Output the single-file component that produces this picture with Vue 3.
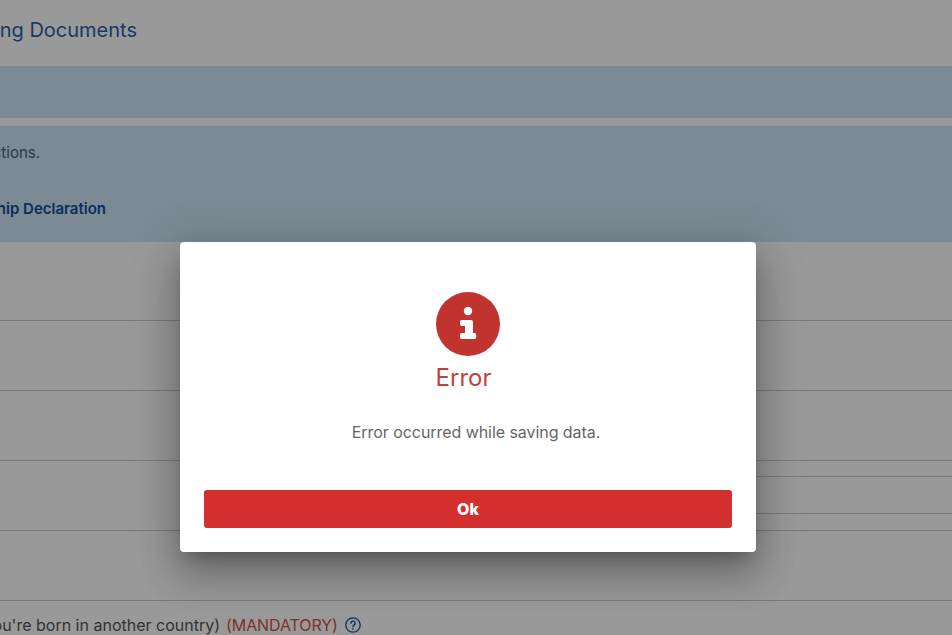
<script setup>
const rows = [
  { id: 2, input: false },
  { id: 3, input: false },
  { id: 4, input: true },
  { id: 5, input: false },
]
</script>

<template>
  <div class="page">
    <header class="head">
      <h1 class="title">Supporting Documents</h1>
    </header>
    <div class="band band-short"></div>
    <section class="band band-tall">
      <p class="clip note">Please read the instructions.</p>
      <p class="clip link">Citizenship Declaration</p>
    </section>
    <div class="row row-first"></div>
    <div v-for="r in rows" :key="r.id" class="row">
      <div v-if="r.input" class="field"></div>
    </div>
    <div class="last">
      <span class="clip-last">Birth Certificate (if you're born in another country)</span>
      <span class="mandatory">(MANDATORY)</span>
      <svg class="help" viewBox="0 0 16 16" width="16" height="16" aria-hidden="true">
        <circle cx="8" cy="8" r="7.2" fill="none" stroke="#0f4c9f" stroke-width="1.3" />
        <path d="M5.9 6.2a2.1 2.1 0 1 1 3.3 1.7c-.7.5-1.2.9-1.2 1.8" fill="none" stroke="#0f4c9f" stroke-width="1.3" stroke-linecap="round" />
        <circle cx="8" cy="11.8" r=".85" fill="#0f4c9f" />
      </svg>
    </div>

    <div class="overlay">
      <div class="modal">
        <svg class="icon" viewBox="0 0 64 64" width="64" height="64" aria-hidden="true">
          <circle cx="32" cy="32" r="32" fill="#c0332e" />
          <circle cx="32" cy="19" r="4.2" fill="#fff" />
          <path d="M26 28h9a2 2 0 0 1 2 2v11h1.500a1.700 1.700 0 0 1 1.700 1.700v2.600a1.700 1.700 0 0 1-1.700 1.700H25.700a1.700 1.700 0 0 1-1.700-1.700v-2.600a1.700 1.700 0 0 1 1.700-1.700h3.300v-7h-3.300a1.700 1.700 0 0 1-1.700-1.700v-2.600a1.700 1.700 0 0 1 1.700-1.700z" fill="#fff" />
        </svg>
        <h2 class="modal-title">Error</h2>
        <p class="message">Error occurred while saving data.</p>
        <button class="ok" type="button">Ok</button>
      </div>
    </div>
  </div>
</template>

<style scoped>
.page {
  position: relative;
  width: 952px;
  height: 635px;
  overflow: hidden;
  background: #fff;
  font-family: Inter, "Noto Sans", sans-serif;
  color: #555;
}
.head {
  height: 66px;
  display: flex;
  align-items: center;
}
.title {
  width: 137px;
  margin: -6px 0 0;
  display: flex;
  justify-content: flex-end;
  white-space: nowrap;
  font-size: 20px;
  font-weight: 400;
  color: #2a5fa8;
}
.band {
  background: #cde6f7;
}
.band-short {
  height: 52px;
  margin-bottom: 8px;
}
.band-tall {
  height: 116px;
  padding-top: 17px;
  box-sizing: border-box;
}
.clip {
  display: flex;
  justify-content: flex-end;
  white-space: nowrap;
  margin: 0;
}
.note {
  width: 40px;
  font-size: 15px;
  line-height: 20px;
  color: #4a6076;
}
.link {
  width: 106px;
  margin-top: 36px;
  font-size: 15px;
  line-height: 20px;
  font-weight: 600;
  color: #0f4c9f;
}
.row {
  height: 69px;
  border-bottom: 1px solid #ccc;
  overflow: hidden;
}
.row-first {
  height: 78px;
}
.field {
  height: 36px;
  margin: 15px -20px 0 400px;
  border: 1px solid #ccc;
}
.last {
  display: flex;
  align-items: center;
  height: 34px;
  padding-top: 15px;
  margin-top: -1px;
  box-sizing: border-box;
  font-size: 16px;
  white-space: nowrap;
}
.clip-last {
  width: 220px;
  display: flex;
  justify-content: flex-end;
  flex: none;
}
.mandatory {
  margin-left: 6px;
  letter-spacing: -0.08px;
  color: #d6504c;
}
.help {
  margin-left: 7px;
  flex: none;
}
.overlay {
  position: absolute;
  inset: 0;
  background: rgba(0, 0, 0, 0.4);
  padding: 242px 0 0 180px;
  box-sizing: border-box;
}
.modal {
  width: 576px;
  height: 310px;
  padding: 50px 24px 24px;
  box-sizing: border-box;
  background: #fff;
  border-radius: 4px;
  box-shadow: 0 11px 15px -7px rgba(0, 0, 0, 0.25), 0 24px 38px 3px rgba(0, 0, 0, 0.18), 0 9px 46px 8px rgba(0, 0, 0, 0.15);
  display: flex;
  flex-direction: column;
  align-items: center;
}
.icon {
  flex: none;
}
.modal-title {
  margin: 6px 0 0;
  padding-right: 9px;
  font-size: 24px;
  line-height: 32px;
  font-weight: 400;
  color: #c5403b;
}
.message {
  margin: 28px 0 0;
  padding-left: 16px;
  font-size: 16px;
  line-height: 20px;
  letter-spacing: -0.06px;
  color: #666;
}
.ok {
  margin-top: auto;
  width: 100%;
  height: 38px;
  border: 0;
  border-radius: 3px;
  background: #d32f2f;
  color: #fff;
  font-family: inherit;
  font-size: 16px;
  font-weight: 800;
}
</style>
